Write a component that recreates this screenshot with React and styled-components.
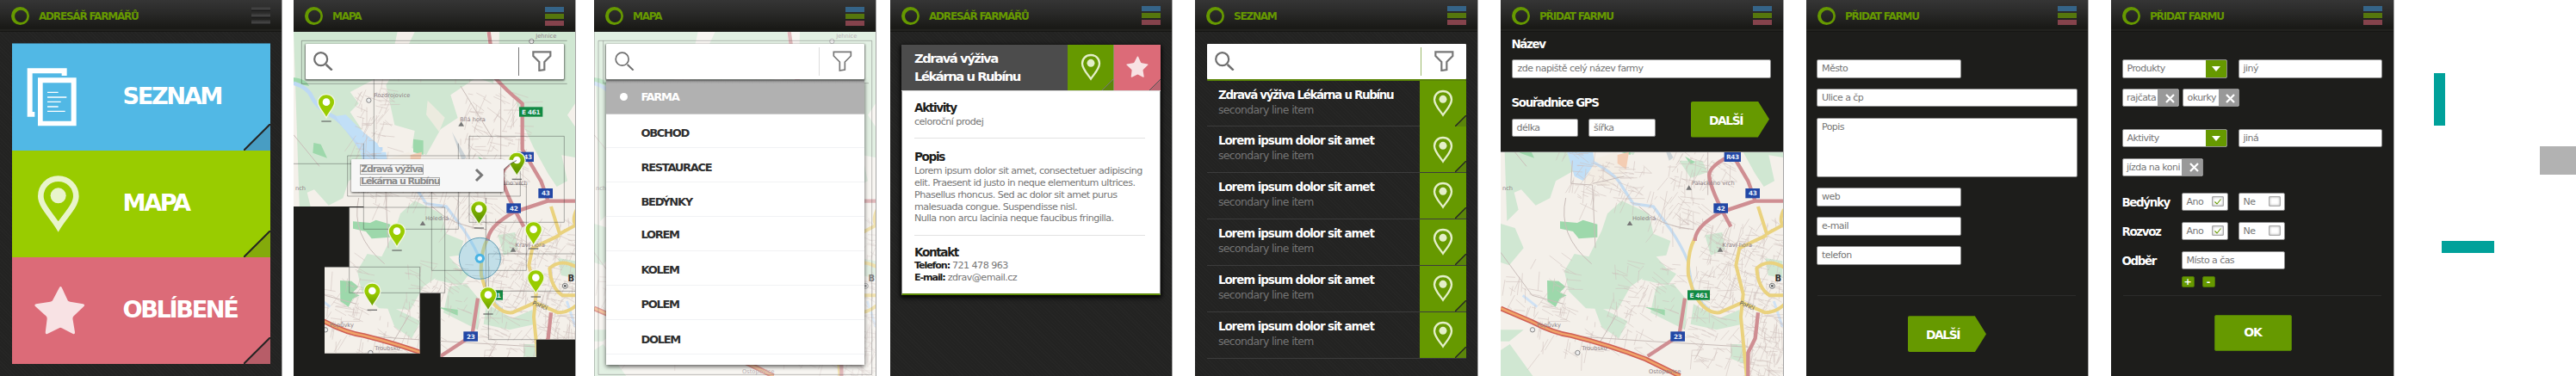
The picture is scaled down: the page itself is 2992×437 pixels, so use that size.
import React from "react";
import styled, { createGlobalStyle, css } from "styled-components";

const GlobalStyle = createGlobalStyle`
  * { box-sizing: border-box; }
  body {
    margin: 0;
    background: #fff;
    font-family: "DejaVu Sans", sans-serif;
    overflow: hidden;
  }
  svg { display: block; }
`;

/* ---------- shell ---------- */

const Board = styled.div`
  display: flex;
  width: 2992px;
  height: 437px;
  overflow: hidden;
`;

const Screen = styled.section`
  position: relative;
  display: flex;
  flex-direction: column;
  flex: none;
  width: ${(p) => p.$w || 327}px;
  height: 437px;
  margin-right: ${(p) => p.$gap}px;
  background: ${(p) => (p.$flat ? "#1d1d1b" : "#242423")};
  ${(p) =>
    !p.$flat &&
    css`
      background-image: repeating-linear-gradient(
        45deg,
        #262625 0 1px,
        #232322 1px 3px
      );
    `}
  box-shadow: 1px 0 0 #a5a5a5;
`;

const Bar = styled.header`
  position: relative;
  display: flex;
  flex: none;
  align-items: center;
  height: 37px;
  padding: 0 13px;
  background: linear-gradient(#353535, #2a2a29 40%, #191916 90%, #1c1c1a);
  ${(p) =>
    p.$ridge &&
    css`
      border-bottom: 1px solid #161614;
      box-shadow: inset 0 -2px 0 #22221f;
    `}
`;

const BarTitle = styled.h1`
  flex: 1;
  margin: 1px 0 0 11px;
  font-size: 12px;
  line-height: 16px;
  letter-spacing: -0.1em;
  color: #690;
  white-space: nowrap;
`;

const Burger = styled.div`
  display: flex;
  flex-direction: column;
  gap: 2px;
  width: 22px;
`;

const Stripe = styled.i`
  height: 6px;
  background: ${(p) => p.$c};
`;

const darkStripe = "linear-gradient(#2a2a2a, #474747 55%, #111)";
const stripes = ["#356488", "#55760d", "#85434c"];

function Header({ title, plain, ridge }) {
  return (
    <Bar $ridge={ridge}>
      <svg width="21" height="21" viewBox="0 0 62 62">
        <path
          fill="#690"
          fillRule="evenodd"
          d="M31 0a31 31 0 1 1 0 62a31 31 0 0 1 0-62zM33 11a21 21 0 1 0 .1 0z"
        />
      </svg>
      <BarTitle>{title}</BarTitle>
      <Burger>
        {stripes.map((c) => (
          <Stripe key={c} $c={plain ? darkStripe : c} />
        ))}
      </Burger>
    </Bar>
  );
}

/* ---------- icons ---------- */

const PinOutline = ({ size = 24 }) => (
  <svg width={size} height={size * 1.36} viewBox="0 0 72 98">
    <path
      d="M36 6C18 6 6 19 6 35c0 18 16 34 30 54c14-20 30-36 30-54C66 19 54 6 36 6z"
      fill="none"
      stroke="#e4efc9"
      strokeWidth="7"
    />
    <circle cx="36" cy="34" r="13.5" fill="#e4efc9" />
  </svg>
);

const STAR =
  "M90 3q4-6 8 0l22 48q3 3 8 4l46 8q8 2 3 8l-37 36q-3 4-3 9l8 49q0 8-7 5l-40-21q-5-3-9 0l-42 21q-7 3-7-5l6-49q0-5-3-9L4 71q-5-6 3-8l50-8q5-1 8-4z";

const Star = ({ size }) => (
  <svg width={size} height={size} viewBox="0 0 182 176">
    <path d={STAR} fill="#f8e2e4" />
  </svg>
);

const Lens = ({ heavy }) => (
  <svg width="23" height="22" viewBox="0 0 69 66">
    <circle cx="26" cy="26" r="22.5" fill="none" stroke="#6e6e6e" strokeWidth={heavy ? 6.5 : 5} />
    <path d="M44 45l21 20" stroke="#6e6e6e" strokeWidth={heavy ? 7.5 : 6} />
  </svg>
);

const Funnel = ({ heavy }) => (
  <svg width="23" height="24" viewBox="0 0 69 72">
    <path
      d="M4 4h60v14L43 39v27l-18 3V39L4 18z"
      fill="none"
      stroke="#777"
      strokeWidth={heavy ? 6.5 : 5}
    />
  </svg>
);

/* ---------- home tiles ---------- */

const Tiles = styled.nav`
  display: flex;
  flex-direction: column;
  margin: 13px 13px 0 13.5px;
  border-top: 1px solid #3a7590;
`;

const Tile = styled.a`
  display: flex;
  align-items: center;
  height: 124px;
  background: ${(p) => p.$c};
  position: relative;
`;

const TileLabel = styled.span`
  padding-bottom: 4px;
  font-size: 27.2px;
  font-weight: bold;
  letter-spacing: -0.087em;
  color: #fff;
`;

const FoldBox = styled.span`
  position: absolute;
  right: 0;
  bottom: 0;
`;

const Fold = ({ size, fill, line = "#242423", w = 2 }) => (
  <FoldBox>
    <svg width={size} height={size} viewBox={`0 0 ${size} ${size}`}>
      <path d={`M0 ${size}L${size} 0V${size}Z`} fill={fill} />
      <path d={`M0 ${size}L${size} 0`} stroke={line} strokeWidth={w} />
    </svg>
  </FoldBox>
);

function Home() {
  return (
    <Screen $gap={14}>
      <Header title="ADRESÁŘ FARMÁŘŮ" plain ridge />
      <Tiles>
        <Tile $c="#51b8e5">
          <svg width="129" height="124" viewBox="40 152 387 372">
            <path
              d="M93 237h138v26h-18v-8H111v134h8v17H93zM130 270h134v168H130zM147 288v133h99V288z"
              fill="#fff"
              fillRule="evenodd"
            />
            <path
              d="M163 321h38M163 338h67M163 354h47M163 371h38M163 387h62"
              stroke="#fff"
              strokeWidth="4"
            />
          </svg>
          <TileLabel>SEZNAM</TileLabel>
          <Fold size={31} fill="#489dc3" />
        </Tile>
        <Tile $c="#9c0">
          <svg width="129" height="124" viewBox="40 524 387 372">
            <path
              d="M201 622c-35 0-61 27-61 61c0 33 37 67 61 106c24-39 62-73 62-106c0-34-27-61-62-61z"
              fill="none"
              stroke="#e9f4cb"
              strokeWidth="20"
            />
            <circle cx="201" cy="681" r="27" fill="#e9f4cb" />
          </svg>
          <TileLabel>MAPA</TileLabel>
          <Fold size={31} fill="#84aa0b" />
        </Tile>
        <Tile $c="#dc6b78">
          <svg width="129" height="124" viewBox="40 896 387 372">
            <path d={STAR} transform="translate(117 998) scale(.98 .97)" fill="#f8e2e4" />
          </svg>
          <TileLabel>OBLÍBENÉ</TileLabel>
          <Fold size={31} fill="#b75d68" />
        </Tile>
      </Tiles>
    </Screen>
  );
}

/* ---------- map ---------- */

let seed = 11;
const rnd = () => {
  seed = (seed * 16807) % 2147483647;
  return seed / 2147483647;
};

/* x, y, width, height, number of street segments */
const districts = [
  [700, 760, 300, 330, 240],
  [600, 320, 230, 330, 130],
  [260, 560, 260, 150, 80],
  [860, 1090, 140, 220, 100],
  [540, 660, 180, 140, 50],
  [230, 300, 130, 240, 60],
  [400, 900, 240, 180, 60],
  [30, 880, 230, 200, 50],
  [140, 1080, 400, 160, 55],
  [640, 1080, 220, 200, 55],
  [300, 150, 350, 120, 30],
];

const streets = districts
  .map(([x, y, w, h, n]) => {
    let d = "";
    for (let i = 0; i < n; i++) {
      const a = rnd() > 0.5 ? 0.35 : 1.9;
      const t = a + (rnd() - 0.5) * 0.8;
      const l = 15 + rnd() * 55;
      const px = x + rnd() * w;
      const py = y + rnd() * h;
      d += `M${px.toFixed(0)} ${py.toFixed(0)}l${(Math.cos(t) * l).toFixed(0)} ${(Math.sin(t) * l).toFixed(0)}`;
    }
    return d;
  })
  .join("");

const badges = [
  [845, 390, "E 461", "#118a43", 82],
  [826, 547, "R43", "#2247a5", 58],
  [896, 674, "43", "#2247a5", 50],
  [785, 726, "42", "#2247a5", 50],
  [708, 1029, "E 461", "#118a43", 78],
  [635, 1173, "23", "#2247a5", 50],
];

const places = [
  [898, 132, "Jehnice", 847, 144, "o"],
  [361, 338, "Rozdrojovice", 280, 350, "o"],
  [642, 423, "Bílá hora", 602, 436, "^"],
  [758, 646, "Palackého vrch", 674, 658, "^"],
  [518, 769, "Holedná", 468, 782, "^"],
  [842, 860, "Kraví hora", 783, 874, "^"],
  [186, 1139, "Popůvky", 129, 1150, "o"],
  [345, 1220, "Troubsko", 286, 1230, "o"],
  [590, 1303, "Ostopovice", 0, 0, ""],
  [42, 662, "nch", 0, 0, ""],
];

const MapSvg = styled.svg`
  position: absolute;
  left: 0;
  top: 0;
  width: 327px;
  height: 437px;
`;

/* "from" is the top of the shown part: labels above it are left out */
function MapArt({ from = 111 }) {
  return (
    <g>
      <path d="M18 0h994v1311H18z" fill="#f4f0ea" />
      <g fill="#d0e7d2">
        <path d="M18 111H380l-20 90-60 75-85 45 30 40-30 30 40 60-15 40 40 100-70 40-20 60-50 25-50-55-25 10 15 60-40 40z" />
        <path d="M440 111h250l25 180-60-20-90 60 25 80-60 40-50 90-50-25 10-60-70-20-30-140 50-80z" />
        <path d="M735 111h277v230l-40 60 40 60v90l-60-10 20 90-37 20-30-45-50-90-35-75-30-100-60-60z" />
        <path d="M440 700l95 45 15 70 60 25-15 50-35 5 40 45-60 10-70 50-45 80-110-5-60-60-15-70 35-60 50 10 45-90 20-60z" />
        <path d="M18 780l50 15 30 70-50 60-30-10zM620 990l50 60-10 100-120-60 20-90zM340 1060l120 60-30 60-60-40zM18 1150h80l-50 40h-30z" />
        <path d="M690 1060l90 50 70-30 10 50-90 20-90-20zM820 1200h50v70l-50-20zM540 905l90 50-30 40-90-20zM640 560h80l20 40-60 20z" />
        <path d="M730 820l60-10 10 60-50 20zM940 900l60 10v60l-50-10zM50 1200l80 111H18v-90z" />
      </g>
      <path d="M485 350l60 60-20 50-45-60zM330 560l90-30 40 60-60 60-90-10z" fill="#f3ece2" opacity=".8" />
      <g fill="#9dd8ab">
        <path d="M225 772l60 5 20-10 50 15v45l-65 5-20-25-45-10zM180 978l40 2 24 20-20 20 24 10-24 12-15 28-28-20zM88 498l25 5 22 48-50-18zM435 485l35 5v50l-35-10zM660 545l35 20-15 8zM520 1070l70 10v20zM18 270q45 5 55 30l-55-10z" />
      </g>
      <path d="M425 540l40-10-10 60-30-20z" fill="#f4cdb3" />
      <path d="M570 460l50 90-15 10z" fill="#ccd3d6" />
      <path
        d="M18 290q50 15 65 50t80 70q40 30 90 110h75"
        fill="none"
        stroke="#bdd9f3"
        strokeWidth="14"
      />
      <path d="M165 405l35-5 60 60 50 40 25 55-70-5-25-55-50-50z" fill="#c1dff7" />
      <path d="M250 530h90l5 40-40 60-30-15z" fill="#c1dff7" />
      <path
        d="M330 560q80 40 105 80t45 70l70 10 60 80q40 60 60 110l15 90q30 60 60 80"
        fill="none"
        stroke="#c6dcf0"
        strokeWidth="10"
      />
      <path d="M970 1050l30 90M95 1030l50 40" stroke="#cfe2f5" strokeWidth="9" />
      <path d={streets} stroke="#cdbfbb" strokeWidth="2" opacity=".8" fill="none" />
      <g fill="none" stroke="#c9bdb9" strokeWidth="3">
        <path d="M268 560l-5 80 75 5 10 220M338 640l110-25M18 470l90 110M500 720q70 70 190 80M245 690q-30 130 90 230M18 880l110 150 110 30M240 1170l300 20 340 20M740 280v400M600 300l110 180M420 1100l-60 100" />
      </g>
      <g fill="none" strokeLinejoin="round">
        <g stroke="#ead27e" strokeWidth="12">
          <path d="M695 830q-28 50-23 130l18 60q40 75 90 70l80-35 80 35q40 0 72-34M915 720l30 95 67-36M1005 730q-20 40 0 60M945 820l-95 45-12 60 25 100-8 80 20 206M1005 932q-55-32-95 3 5 70 45 95h50" />
        </g>
        <g stroke="#cf8e92" strokeWidth="13">
          <path d="M698 111l22 160q40 45 95 90v160l65 110 25 70h107M905 700l-120 40q-90 50-90 100M825 540q-85 40-80 75 5 50 75 175M915 1090l-10 90-25 50v81M660 1040l-20 130-110 72" />
        </g>
        <path d="M18 1075l105 45q80 42 140 50 140 35 260 82l120 59" stroke="#cf5f55" strokeWidth="17" />
        <path d="M18 1075l105 45q80 42 140 50 140 35 260 82l120 59" stroke="#f0a368" strokeWidth="8" />
      </g>
      <g fontFamily="DejaVu Sans" fontSize="20" textAnchor="middle" fill="#8d8085">
        {places
          .filter((p) => p[1] > from)
          .map(([x, y, t, mx, my, m]) => (
            <React.Fragment key={t}>
              <text x={x} y={y}>{t}</text>
              {m === "o" && <circle cx={mx} cy={my} r="8" fill="#eee" stroke="#888" strokeWidth="3" />}
              {m === "^" && <path d={`M${mx - 10} ${my + 4}l10-16 10 16z`} fill="#777" />}
            </React.Fragment>
          ))}
        <text x="878" y="1072" transform="rotate(22 878 1062)" fill="#555">Poříčí</text>
        <text x="985" y="980" fontSize="30" fontWeight="bold" fill="#333">B</text>
      </g>
      <circle cx="964" cy="997" r="9" fill="#eee" stroke="#777" strokeWidth="3" />
      <circle cx="964" cy="997" r="4" fill="#555" />
      <g fontFamily="DejaVu Sans" fontWeight="bold" fontSize="22" textAnchor="middle" fill="#e8f0fa">
        {badges
          .filter((b) => b[1] > from)
          .map(([x, y, t, c, w]) => (
            <React.Fragment key={x}>
              <rect x={x - w / 2} y={y - 17} width={w} height="34" fill={c} />
              <text x={x} y={y + 8} letterSpacing="-1">{t}</text>
            </React.Fragment>
          ))}
      </g>
    </g>
  );
}

const Layer = styled.div`
  position: relative;
  display: flex;
  flex-direction: column;
  padding: 13.5px 13px 0 13.5px;
`;

const Search = styled.div`
  position: relative;
  z-index: 1;
  display: flex;
  flex: none;
  align-items: center;
  height: 41px;
  margin-bottom: ${(p) => p.$below || 0}px;
  padding-left: ${(p) => p.$inset || 9}px;
  border-radius: 1px;
  background: #fff;
  box-shadow: ${(p) => p.$shadow || "0 1px 2px 1px rgba(60,60,60,.65)"};
`;

const SearchEnd = styled.span`
  display: flex;
  align-items: center;
  justify-content: center;
  width: 53px;
  height: 33px;
  margin-left: auto;
  border-left: 1px solid ${(p) => p.$c};
`;

function SearchField({ heavy, sep, ...rest }) {
  return (
    <Search {...rest}>
      <Lens heavy={heavy} />
      <SearchEnd $c={sep}>
        <Funnel heavy={heavy} />
      </SearchEnd>
    </Search>
  );
}

const pins = [
  [132, 358],
  [378, 808],
  [854, 802],
  [862, 970],
  [696, 1030, 1],
  [292, 1016, 1],
  [664, 730, 2],
  [796, 560, 2],
];

const pinFill = ["#9c0", "url(#pinMid)", "url(#pinDark)"];

const Callout = styled.div`
  position: absolute;
  left: 67px;
  top: 184.5px;
  display: flex;
  align-items: center;
  justify-content: space-between;
  width: 177px;
  height: 38px;
  padding: 0 23px 0 10px;
  border-radius: 1px;
  background: #f7f7f7;
  box-shadow: 0 1px 3px rgba(0, 0, 0, 0.7);
`;

const CalloutLine = styled.div`
  width: max-content;
  height: ${(p) => p.$h}px;
  margin-bottom: ${(p) => p.$mb || 0}px;
  border: 1px solid #a9a9a9;
  font-size: 11px;
  font-weight: bold;
  line-height: ${(p) => p.$h - 2}px;
  letter-spacing: -0.1em;
  color: #8b8b8b;
  white-space: nowrap;
`;

const Tail = styled.span`
  position: absolute;
  left: 175px;
  top: 0;
`;

function MapScreen() {
  return (
    <Screen $gap={22} $flat>
      <MapSvg viewBox="18 0 981 1311" preserveAspectRatio="none">
        <defs>
          <clipPath id="tiles">
            <path d="M18 111H1000V1184H863V1245H530V1022H458V1232H126V931H212V723H262V720H18Z" />
          </clipPath>
          <linearGradient id="pinMid" x2="0" y2="1">
            <stop offset=".4" stopColor="#9c0" />
            <stop offset="1" stopColor="#690" />
          </linearGradient>
          <linearGradient id="pinDark" x2="0" y2="1">
            <stop offset="0" stopColor="#9c0" />
            <stop offset=".7" stopColor="#690" />
          </linearGradient>
        </defs>
        <g clipPath="url(#tiles)">
          <MapArt />
        </g>
        <path
          d="M46 292V142H971M46 292H971M298 275V571H18M262 500V799H592V500M206 543H808V684H206ZM630 475H961V775H630ZM499 643H829V943H499ZM212 723H545V1021H212ZM1000 885H697V1184H1000M688 690V1015H1000M126 931H458V1230"
          fill="none"
          stroke="#3c3c3c"
          strokeOpacity=".5"
          strokeWidth="2.4"
        />
        <circle cx="667" cy="901" r="72" fill="#51b8e5" fillOpacity=".3" stroke="#4c8ea8" strokeWidth="2.5" />
        <circle cx="667" cy="901" r="17" fill="#48b3e3" />
        <circle cx="667" cy="901" r="8" fill="#e3f3fb" />
        {pins.map(([x, y, k = 0]) => (
          <g key={x} transform={`translate(${x} ${y})`}>
            <path d="M-17 65h34" stroke="#555" strokeOpacity=".8" strokeWidth="4" />
            <path
              d="M0-29c-17 0-29 12-29 28c0 17 17 31 29 54c12-23 29-37 29-54c0-16-12-28-29-28z"
              fill={pinFill[k]}
              stroke="#f2f7e4"
              strokeWidth="4"
            />
            <circle r="13" cy="-2" fill="#fff" />
          </g>
        ))}
      </MapSvg>
      <Header title="MAPA" />
      <Layer>
        <SearchField heavy sep="#777" />
      </Layer>
      <Callout>
        <div>
          <CalloutLine $h={12} $mb={3}>Zdravá výživa</CalloutLine>
          <CalloutLine $h={10}>Lékárna u Rubínu</CalloutLine>
        </div>
        <svg width="11" height="17" viewBox="0 0 11 17">
          <path d="M2 2l6.5 6.5L2 15" fill="none" stroke="#777" strokeWidth="3" />
        </svg>
        <Tail>
          <svg width="18" height="14" viewBox="0 0 18 14">
            <path d="M0 0.5L17 1Q7 6 2 12L0 14z" fill="#f7f7f7" />
            <path d="M17 1.500Q7 6 2 12.500" stroke="#555" strokeWidth=".8" fill="none" />
          </svg>
        </Tail>
      </Callout>
    </Screen>
  );
}

/* ---------- filter menu ---------- */

const Menu = styled.ul`
  display: flex;
  flex-direction: column;
  height: 331px;
  margin: 1px 0 0;
  padding: 0;
  list-style: none;
  background: #fff;
  box-shadow: 0 2px 5px rgba(0, 0, 0, 0.65);
`;

const MenuRow = styled.li`
  display: flex;
  flex: none;
  align-items: center;
  gap: 16px;
  height: ${(p) => (p.$on ? 40 : 39.95)}px;
  padding: ${(p) => p.$drop}px 0 0 ${(p) => (p.$on ? 16 : 41)}px;
  border-bottom: 1px solid ${(p) => (p.$on ? "#ccc" : "#f1f2f4")};
  background: ${(p) => (p.$on ? "linear-gradient(#999, #b1b1b1 12%)" : "#fff")};
  font-size: 13px;
  font-weight: bold;
  letter-spacing: -0.1em;
  color: ${(p) => (p.$on ? "#fff" : "#2e2e2e")};
`;

const Dot = styled.i`
  width: 9px;
  height: 9px;
  border-radius: 50%;
  background: #fff;
`;

const menuItems = [
  ["OBCHOD", 5],
  ["RESTAURACE", 5],
  ["BEDÝNKY", 6],
  ["LOREM", 1],
  ["KOLEM", 3],
  ["POLEM", 3],
  ["DOLEM", 5],
];

function FilterScreen() {
  return (
    <Screen $gap={17}>
      <MapSvg viewBox="18 0 981 1311" preserveAspectRatio="none">
        <MapArt />
        <path d="M18 111h982v1200H18z" fill="#fff" fillOpacity=".38" />
        <path
          d="M19 111V1311M33 1306V142H986V1306ZM50 290V142M50 290H975"
          fill="none"
          stroke="#555"
          strokeOpacity=".45"
          strokeWidth="2.4"
        />
      </MapSvg>
      <Header title="MAPA" />
      <Layer>
        <SearchField $inset={10} sep="#ddd" />
        <Menu>
          <MenuRow $on $drop={1}>
            <Dot />
            FARMA
          </MenuRow>
          {menuItems.map(([t, d]) => (
            <MenuRow key={t} $drop={d}>{t}</MenuRow>
          ))}
        </Menu>
      </Layer>
    </Screen>
  );
}

/* ---------- detail ---------- */

const Card = styled.article`
  margin: 14.5px 13px 0;
  height: 291px;
  background: #fff;
  border: solid #888;
  border-width: 0 1px;
  border-bottom: 2px solid #5d8a06;
  box-shadow: 0 2px 5px 1px #000;
`;

const CardHead = styled.div`
  display: flex;
  height: 54px;
  margin: 0 -1px;
  background: #4c4c4c;
  border-bottom: 1px solid #ddd;
`;

const CardTitle = styled.h2`
  flex: 1;
  margin: 5px 0 0 15px;
  font-size: 14.8px;
  line-height: 21.7px;
  letter-spacing: -0.1em;
  color: #fff;
`;

const Action = styled.span`
  position: relative;
  display: flex;
  align-items: center;
  justify-content: center;
  width: 54px;
  height: 53px;
  background: ${(p) => p.$c};
  border-right: ${(p) => (p.$edge ? "1px solid #8a9660" : "0")};
`;

const Section = styled.section`
  height: ${(p) => p.$h}px;
  margin: 0 17px 0 14px;
  padding-top: ${(p) => p.$pt}px;
  border-bottom: ${(p) => (p.$last ? "0" : "1px solid #e2e2e2")};
`;

const Heading = styled.h3`
  margin: 0;
  font-size: 13.6px;
  line-height: 18px;
  letter-spacing: -0.1em;
  color: #1d1d1b;
`;

const Para = styled.p`
  margin: ${(p) => p.$mt || 0}px 0 0;
  font-size: 11.15px;
  line-height: 13.85px;
  letter-spacing: -0.05em;
  color: #757575;
  white-space: nowrap;
  b {
    letter-spacing: -0.1em;
    color: #1d1d1b;
  }
`;

function DetailScreen() {
  return (
    <Screen $gap={27}>
      <Header title="ADRESÁŘ FARMÁŘŮ" ridge />
      <Card>
        <CardHead>
          <CardTitle>
            Zdravá výživa
            <br />
            Lékárna u Rubínu
          </CardTitle>
          <Action $c="#690" $edge>
            <PinOutline size={24} />
            <Fold size={13} fill="#5d860b" line="#777" w={1} />
          </Action>
          <Action $c="#dc6b78">
            <Star size={26} />
            <Fold size={13} fill="#bb6470" line="#555" w={1} />
          </Action>
        </CardHead>
        <Section $h={55} $pt={10}>
          <Heading>Aktivity</Heading>
          <Para $mt={1.5}>celoroční prodej</Para>
        </Section>
        <Section $h={113} $pt={12}>
          <Heading>Popis</Heading>
          <Para $mt={1.5}>
            Lorem ipsum dolor sit amet, consectetuer adipiscing
            <br />
            elit. Praesent id justo in neque elementum ultrices.
            <br />
            Phasellus rhoncus. Sed ac dolor sit amet purus
            <br />
            malesuada congue. Suspendisse nisl.
            <br />
            Nulla non arcu lacinia neque faucibus fringilla.
          </Para>
        </Section>
        <Section $h={60} $pt={10.5} $last>
          <Heading>Kontakt</Heading>
          <Para>
            <b>Telefon:</b> 721 478 963
            <br />
            <b>E-mail:</b> zdrav@email.cz
          </Para>
        </Section>
      </Card>
    </Screen>
  );
}

/* ---------- list ---------- */

const ListRow = styled.div`
  display: flex;
  justify-content: space-between;
  height: 53.85px;
  border-bottom: 1px solid #3c3c3c;
`;

const ListText = styled.div`
  padding: 7px 0 0 13.5px;
  white-space: nowrap;
`;

const Primary = styled.div`
  font-size: 13.4px;
  font-weight: bold;
  line-height: 19px;
  letter-spacing: ${(p) => p.$track}em;
  color: #fff;
`;

const Secondary = styled.div`
  font-size: 12.4px;
  line-height: 16px;
  letter-spacing: -0.05em;
  color: #757575;
`;

const listItems = [
  ["Zdravá výživa Lékárna u Rubínu", -0.097],
  ["Lorem ipsum dolor sit amet", -0.079],
  ["Lorem ipsum dolor sit amet", -0.079],
  ["Lorem ipsum dolor sit amet", -0.079],
  ["Lorem ipsum dolor sit amet", -0.079],
  ["Lorem ipsum dolor sit amet", -0.079],
];

function ListScreen() {
  return (
    <Screen $gap={27} $w={328}>
      <Header title="SEZNAM" ridge />
      <Layer>
        <SearchField heavy sep="#9bb86a" $below={2} $shadow="0 2px 0 #5a8505" />
        {listItems.map(([t, track], i) => (
          <ListRow key={i}>
            <ListText>
              <Primary $track={track}>{t}</Primary>
              <Secondary>secondary line item</Secondary>
            </ListText>
            <Action $c="#690">
              <PinOutline size={24} />
              <Fold size={13} fill="#5b850a" w={1.4} />
            </Action>
          </ListRow>
        ))}
      </Layer>
    </Screen>
  );
}

/* ---------- forms ---------- */

const Form = styled.form`
  position: relative;
  display: flex;
  flex-direction: column;
  padding: ${(p) => p.$pad};
  background: #1d1d1b;
  border-bottom: ${(p) => (p.$line ? "1px solid #777" : "0")};
  height: ${(p) => (p.$h ? `${p.$h}px` : "auto")};
`;

const Row = styled.div`
  display: flex;
  gap: ${(p) => p.$gap || 0}px;
  margin-top: ${(p) => p.$mt || 0}px;
`;

const Field = styled.div`
  display: flex;
  flex: none;
  justify-content: space-between;
  width: ${(p) => p.$w}px;
  height: ${(p) => p.$h || 21.5}px;
  margin-top: ${(p) => p.$mt || 0}px;
  padding-left: ${(p) => p.$pl || 5}px;
  border: 1px solid #8d8d8d;
  border-radius: 2px;
  overflow: hidden;
  background: #fff;
  font-size: 11px;
  line-height: ${(p) => p.$lh || 20}px;
  letter-spacing: -0.05em;
  color: #757575;
  white-space: nowrap;
`;

const Label = styled.label`
  width: ${(p) => (p.$w ? `${p.$w}px` : "auto")};
  font-size: 13.4px;
  font-weight: bold;
  line-height: ${(p) => p.$lh || 20}px;
  letter-spacing: -0.1em;
  color: #fff;
`;

const Next = styled.div`
  position: relative;
  width: 91px;
  height: 42px;
  margin: ${(p) => p.$m};
  clip-path: polygon(0 0, 85.5% 0, 100% 50%, 85.5% 100%, 0 100%);
  background: #690;
  border-radius: 2px;
  padding-left: 21px;
  font-size: 13.8px;
  font-weight: bold;
  line-height: 44px;
  letter-spacing: -0.1em;
  color: #fff;
`;

const MapPane = styled.div`
  position: relative;
  flex: 1;
  overflow: hidden;
`;

function NewFarmMap() {
  return (
    <Screen $gap={27} $w={328} $flat>
      <Header title="PŘIDAT FARMU" ridge />
      <Form $pad="5px 0 0 12.500px" $h={140} $line>
        <Label>Název</Label>
        <Field $w={301} $mt={7} $pl={6}>zde napiště celý název farmy</Field>
        <Row $mt={18}>
          <div>
            <Label>Souřadnice GPS</Label>
            <Row $gap={12} $mt={8}>
              <Field $w={77.5}>délka</Field>
              <Field $w={78}>šířka</Field>
            </Row>
          </div>
          <Next $m="9px 0 0 41px">DALŠÍ</Next>
        </Row>
      </Form>
      <MapPane>
        <svg width="328" height="260" viewBox="18 531 984 780">
          <MapArt from={531} />
        </svg>
      </MapPane>
    </Screen>
  );
}

const Rule = styled.hr`
  width: 300px;
  height: 1px;
  margin: ${(p) => p.$mt}px 0 0 1px;
  border: 0;
  background: #2b2b2a;
`;

function NewFarmAddress() {
  return (
    <Screen $gap={27} $w={327} $flat>
      <Header title="PŘIDAT FARMU" ridge />
      <Form $pad="32px 0 0 12px">
        <Field $w={168}>Město</Field>
        <Field $w={303} $mt={12.4}>Ulice a čp</Field>
        <Field $w={303} $h={69} $mt={12.4}>Popis</Field>
        <Field $w={168} $mt={12.6}>web</Field>
        <Field $w={168} $mt={12.4}>e-mail</Field>
        <Field $w={168} $mt={12.4}>telefon</Field>
        <Rule $mt={35.5} />
        <Next $m="23px 0 0 106px">DALŠÍ</Next>
      </Form>
    </Screen>
  );
}

const Caret = styled.span`
  display: flex;
  align-items: center;
  justify-content: center;
  width: 24px;
  background: #690;
  &::before {
    content: "";
    border: 5px solid transparent;
    border-top: 6px solid #fff;
    border-bottom: 0;
  }
`;

const Close = styled.span`
  display: flex;
  align-items: center;
  justify-content: center;
  width: 23.5px;
  padding-left: 4px;
  background: #999;
`;

const Box = styled.span`
  align-self: center;
  width: 14px;
  height: 12px;
  margin-right: 4px;
  border: 1px solid #aaa;
  border-radius: 1px;
  box-shadow: inset 0 0 3px #999;
  padding: 2px;
`;

const Chip = ({ w, children }) => (
  <Field $w={w} $pl={4.5}>
    {children}
    <Close>
      <svg width="12" height="12" viewBox="0 0 12 12">
        <path d="M2 2l9 9M11 2l-9 9" stroke="#fff" strokeWidth="2.3" />
      </svg>
    </Close>
  </Field>
);

const Check = ({ on, children }) => (
  <Field $w={54}>
    {children}
    <Box>
      {on && (
        <svg width="8" height="7" viewBox="0 0 8 7">
          <path d="M.5 3.500l2.500 2.500 4.500-5.500" fill="none" stroke="#690" strokeWidth="1.1" />
        </svg>
      )}
    </Box>
  </Field>
);

const Mini = styled.button`
  width: 15px;
  height: 13px;
  padding: 0;
  border: 1px solid #4c7207;
  border-radius: 2px;
  background: #690;
  font: bold 11px/11px "DejaVu Sans", sans-serif;
  color: #fff;
`;

const Ok = styled.div`
  width: 90px;
  height: 42px;
  margin: 22.5px 0 0 107px;
  border: 1px solid #507c06;
  border-radius: 2px;
  background: #690;
  font-size: 14px;
  font-weight: bold;
  line-height: 39px;
  letter-spacing: -0.08em;
  text-align: center;
  color: #fff;
`;

function NewFarmOptions() {
  return (
    <Screen $gap={47} $w={328} $flat>
      <Header title="PŘIDAT FARMU" ridge />
      <Form $pad="32px 0 0 12.500px">
        <Row $gap={13}>
          <Field $w={122}>
            Produkty
            <Caret />
          </Field>
          <Field $w={167.5} $lh={19}>jiný</Field>
        </Row>
        <Row $gap={4.5} $mt={12.4}>
          <Chip w={66}>rajčata</Chip>
          <Chip w={66}>okurky</Chip>
        </Row>
        <Row $gap={12.5} $mt={25.4}>
          <Field $w={122.5}>
            Aktivity
            <Caret />
          </Field>
          <Field $w={167.5} $lh={19}>jiná</Field>
        </Row>
        <Row $mt={12.3}>
          <Chip w={94}>jízda na koni</Chip>
        </Row>
        <Row $mt={18.5}>
          <Label $w={69} $lh={24}>Bedýnky</Label>
          <Row $gap={12}>
            <Check on>Ano</Check>
            <Check>Ne</Check>
          </Row>
        </Row>
        <Row $mt={10}>
          <Label $w={69} $lh={24}>Rozvoz</Label>
          <Row $gap={12}>
            <Check on>Ano</Check>
            <Check>Ne</Check>
          </Row>
        </Row>
        <Row $mt={10}>
          <Label $w={69} $lh={24}>Odběr</Label>
          <Field $w={120}>Místo a čas</Field>
        </Row>
        <Row $gap={9} $mt={5}>
          <Label $w={60} $lh={12} />
          <Mini type="button">+</Mini>
          <Mini type="button">-</Mini>
        </Row>
        <Rule $mt={9} />
        <Ok>OK</Ok>
      </Form>
    </Screen>
  );
}

/* ---------- colour blocks ---------- */

const Blocks = styled.aside`
  display: flex;
  flex: 1;
  flex-direction: column;
  padding-top: 85px;
`;

const Block = styled.div`
  width: ${(p) => p.$w}px;
  height: ${(p) => p.$h}px;
  margin: ${(p) => p.$m};
  background: ${(p) => p.$c};
`;

export default function App() {
  return (
    <Board>
      <GlobalStyle />
      <Home />
      <MapScreen />
      <FilterScreen />
      <DetailScreen />
      <ListScreen />
      <NewFarmMap />
      <NewFarmAddress />
      <NewFarmOptions />
      <Blocks>
        <Block $w={13} $h={61} $m="0" $c="#00a19a" />
        <Block $w={42} $h={33} $m="24px 0 0 auto" $c="#b2b2b2" />
        <Block $w={61} $h={14} $m="77px 0 0 9px" $c="#00a19a" />
      </Blocks>
    </Board>
  );
}
